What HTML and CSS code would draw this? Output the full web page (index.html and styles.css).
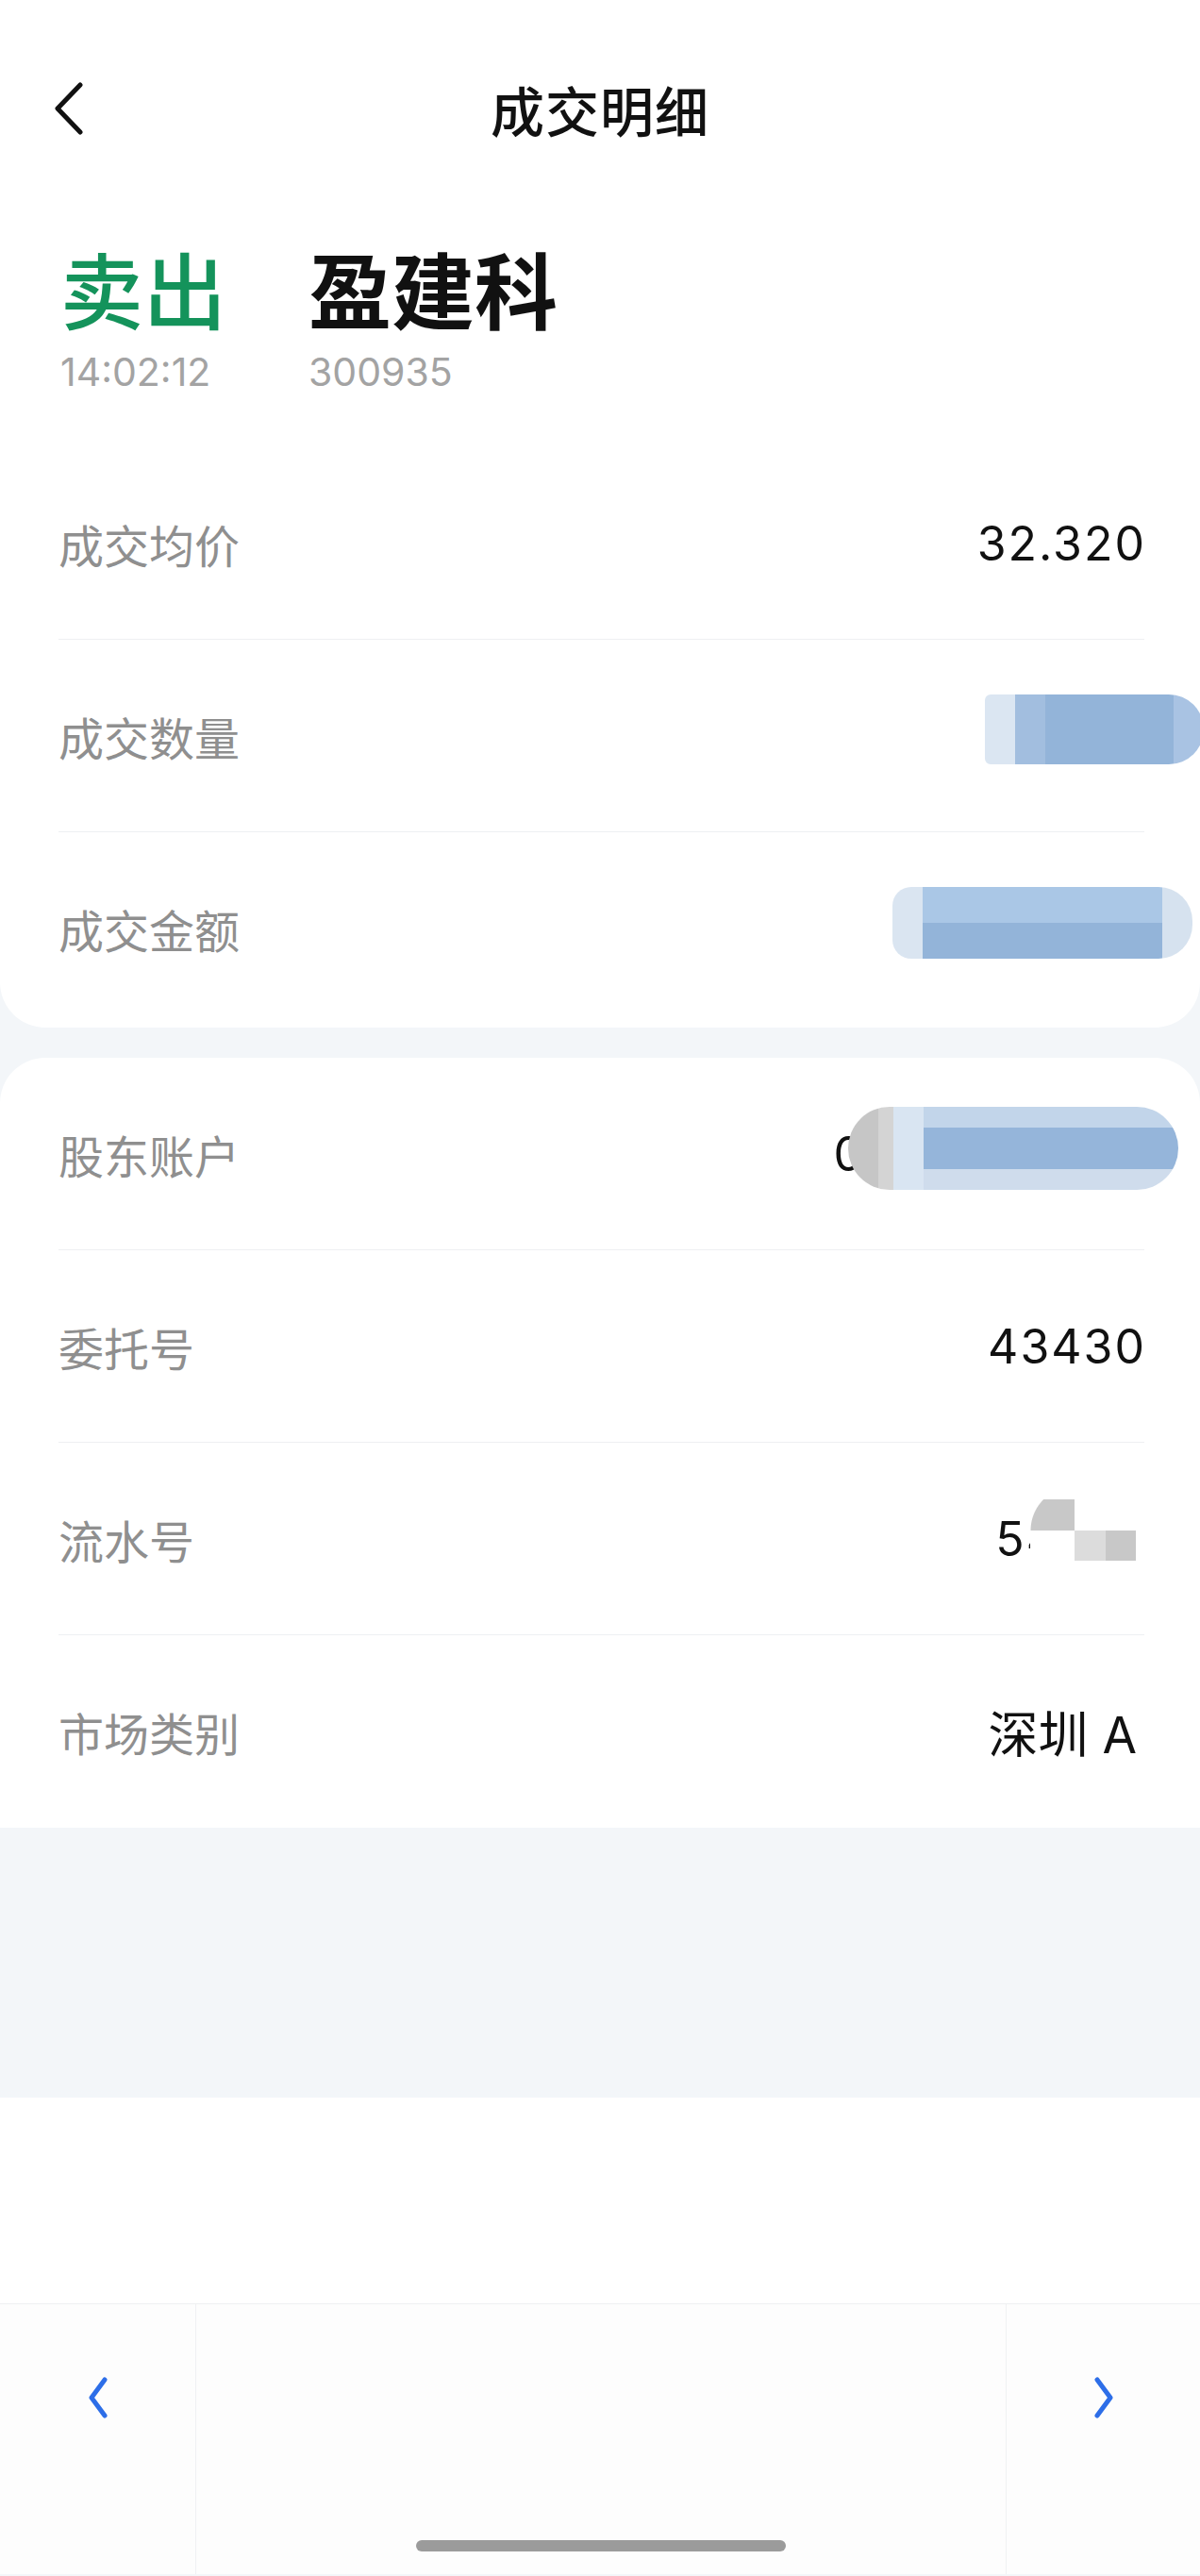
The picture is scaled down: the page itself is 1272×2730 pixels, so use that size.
FILE: index.html
```html
<!DOCTYPE html>
<html lang="zh-CN">
<head>
    <meta charset="UTF-8">
    <meta name="viewport" content="width=device-width, initial-scale=1.0">
    <title>成交明细</title>
    <link rel="stylesheet" href="styles.css">
</head>
<body>

    <!-- 顶部：标题 + 成交概要 + 成交数据 -->
    <section class="head-card">
        <header class="topbar">
            <a class="back" href="#">
                <svg width="30" height="56" viewBox="0 0 30 56">
                    <polyline points="27,3 3,28 27,53" fill="none" stroke="#111" stroke-width="5" stroke-linecap="round" stroke-linejoin="round"/>
                </svg>
            </a>
            <h1>成交明细</h1>
            <span></span>
        </header>

        <div class="summary">
            <div class="col col-side">
                <div class="side">卖出</div>
                <div class="sub">14:02:12</div>
            </div>
            <div class="col">
                <div class="stock">盈建科</div>
                <div class="sub">300935</div>
            </div>
        </div>

        <ul class="rows">
            <li class="row">
                <span class="label">成交均价</span>
                <span class="value">32.320</span>
            </li>
            <li class="row">
                <span class="label">成交数量</span>
                <span class="value"><span class="mask mask-qty"></span></span>
            </li>
            <li class="row">
                <span class="label">成交金额</span>
                <span class="value"><span class="mask mask-amount"></span></span>
            </li>
        </ul>
    </section>

    <!-- 委托信息 -->
    <section class="card">
        <ul class="rows">
            <li class="row">
                <span class="label">股东账户</span>
                <span class="value">0<span class="mask mask-account"></span></span>
            </li>
            <li class="row">
                <span class="label">委托号</span>
                <span class="value">43430</span>
            </li>
            <li class="row">
                <span class="label">流水号</span>
                <span class="value">54<span class="mask mask-serial"></span></span>
            </li>
            <li class="row">
                <span class="label">市场类别</span>
                <span class="value value-cn">深圳 A</span>
            </li>
        </ul>
    </section>

    <div class="filler"></div>
    <div class="blank"></div>

    <!-- 底部翻页 -->
    <nav class="pager">
        <a class="pager-btn" href="#">
            <svg width="22" height="44" viewBox="0 0 22 44">
                <polyline points="18,3 4,22 18,41" fill="none" stroke="#2d6ee8" stroke-width="5" stroke-linecap="round" stroke-linejoin="round"/>
            </svg>
        </a>
        <div class="pager-mid">
            <span class="home-bar"></span>
        </div>
        <a class="pager-btn" href="#">
            <svg width="22" height="44" viewBox="0 0 22 44">
                <polyline points="4,3 18,22 4,41" fill="none" stroke="#2d6ee8" stroke-width="5" stroke-linecap="round" stroke-linejoin="round"/>
            </svg>
        </a>
    </nav>

</body>
</html>
```

FILE: styles.css
```css
body {
    margin: 0;
    background-color: #f3f6f9;
    font-family: "Noto Sans CJK SC", sans-serif;
    color: #111;
}

.head-card {
    background-color: #fff;
    border-radius: 0 0 48px 48px;
    padding-bottom: 3px;
}

.topbar {
    height: 230px;
    display: grid;
    grid-template-columns: 1fr auto 1fr;
    align-items: center;
}
.back {
    display: flex;
    margin-left: 58px;
}
.topbar h1 {
    margin: 0;
    font-size: 57px;
    font-weight: 500;
    letter-spacing: 1px;
}

.summary {
    display: flex;
    padding: 10px 64px 55px;
}
.col-side {
    width: 263px;
}
.side, .stock {
    font-size: 88px;
    line-height: normal;
}
.side {
    color: #14935b;
    font-weight: 500;
}
.stock {
    font-weight: 700;
}
.sub {
    margin-top: 2px;
    font-family: "Inter", "Noto Sans CJK SC", sans-serif;
    font-size: 41px;
    line-height: normal;
    color: #a3a3a3;
}

.rows {
    list-style: none;
    margin: 0;
    padding: 0;
}
.row {
    box-sizing: border-box;
    height: 204px;
    margin: 0 59px 0 62px;
    display: flex;
    justify-content: space-between;
    align-items: center;
    border-bottom: 1px solid #eef0f2;
}
.row:last-child {
    border-bottom: none;
}
.label {
    font-size: 48px;
    color: #8f8f8f;
}
.value {
    display: inline-flex;
    align-items: center;
    margin-right: -2px;
    font-family: "Inter", "Noto Sans CJK SC", sans-serif;
    font-size: 50px;
    letter-spacing: 2px;
    color: #111;
}
.value-cn {
    font-size: 53px;
    letter-spacing: 0;
    margin-right: 8px;
}

/* 打码区域 */
.mask {
    display: inline-block;
}
.mask-qty {
    width: 232px;
    height: 74px;
    margin: 0 -61px 14px 0;
    border-radius: 6px 37px 37px 6px;
    background: linear-gradient(90deg, #dbe6f2 0 32px, #a2bedf 32px 64px, #93b4d9 64px 200px, #a9c3e3 200px);
}
.mask-amount {
    width: 318px;
    height: 76px;
    margin: 0 -49px 12px 0;
    border-radius: 20px 36px 36px 20px;
    background:
        linear-gradient(90deg, #dae5f1 0 32px, transparent 32px 286px, #d6e2ef 286px),
        linear-gradient(#aac7e6 0 50%, #93b4d9 50%);
}
.mask-account {
    width: 350px;
    height: 88px;
    margin: 0 -34px 12px -18px;
    border-radius: 44px;
    background:
        linear-gradient(90deg, #c6c6c6 0 32px, #d4d4d4 32px 48px, #d9e5f2 48px 80px, transparent 80px),
        linear-gradient(#c2d5ea 0 25%, #95b5da 25% 75%, #cfdcec 75%);
}
.mask-serial {
    width: 115px;
    height: 65px;
    margin: 0 8px 18px -30px;
    background:
        radial-gradient(circle at 100% 100%, #c8c8c8 46px, transparent 47px) 0 0 / 47px 33px no-repeat,
        linear-gradient(#dcdcdc, #dcdcdc) 47px 33px / 33px 32px no-repeat,
        linear-gradient(#c8c8c8, #c8c8c8) 80px 33px / 32px 32px no-repeat,
        #fff;
}

.card {
    margin-top: 32px;
    background-color: #fff;
    border-radius: 48px 48px 0 0;
}

.filler {
    height: 286px;
}
.blank {
    height: 218px;
    background-color: #fff;
}

.pager {
    height: 287px;
    box-sizing: border-box;
    display: grid;
    grid-template-columns: 207px 1fr 205px;
    border-top: 1px solid #eef0f2;
    background-color: #fdfdfd;
}
.pager-btn {
    display: flex;
    justify-content: center;
    padding-top: 77px;
}
.pager-btn svg {
    display: block;
}
.pager-mid {
    display: flex;
    justify-content: center;
    align-items: flex-end;
    padding-bottom: 24px;
    border-left: 1px solid #f0f1f3;
    border-right: 1px solid #f0f1f3;
}
.home-bar {
    width: 392px;
    height: 12px;
    border-radius: 6px;
    background-color: #9b9b9b;
}
```
